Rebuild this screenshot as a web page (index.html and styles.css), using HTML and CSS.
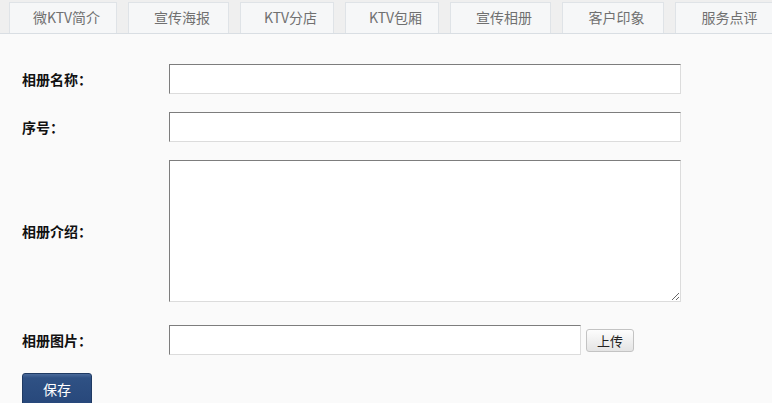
FILE: index.html
```html
<!DOCTYPE html>
<html lang="zh">
<head>
<meta charset="utf-8">
<title>相册</title>
<link rel="stylesheet" href="styles.css">
</head>
<body>
<div class="tabs">
  <div class="tab w1">微KTV简介</div>
  <div class="tab w2">宣传海报</div>
  <div class="tab w3">KTV分店</div>
  <div class="tab w3">KTV包厢</div>
  <div class="tab w2">宣传相册</div>
  <div class="tab w4">客户印象</div>
  <div class="tab w4">服务点评</div>
</div>
<form class="form">
  <div class="row">
    <label class="label">相册名称：</label>
    <input class="field" type="text">
  </div>
  <div class="row">
    <label class="label">序号：</label>
    <input class="field" type="text">
  </div>
  <div class="row">
    <label class="label">相册介绍：</label>
    <textarea class="field area"></textarea>
  </div>
  <div class="row row-file">
    <label class="label">相册图片：</label>
    <div class="file-wrap">
      <input class="field file" type="text">
      <button type="button" class="upload">上传</button>
    </div>
  </div>
  <div class="row-save">
    <button type="button" class="save">保存</button>
  </div>
</form>
</body>
</html>
```
FILE: styles.css
```css
html, body {
  margin: 0;
  padding: 0;
  background: #fafafa;
  font-family: "Noto Sans CJK SC", "DejaVu Sans", sans-serif;
  overflow: hidden;
}
.tabs {
  display: flex;
  gap: 11px;
  height: 31px;
  padding: 2px 0 0 9px;
  background: #efefef;
  border-bottom: 1px solid #d9dee3;
  overflow: hidden;
  white-space: nowrap;
}
.tab {
  flex: none;
  box-sizing: border-box;
  height: 31px;
  line-height: 29px;
  background: #f6f7f8;
  border: 1px solid #dfe3e7;
  border-bottom: none;
  color: #707070;
  font-size: 14px;
  padding-left: 7px;
  text-align: center;
}
.w1 { width: 108px; }
.w2 { width: 101px; }
.w3 { width: 94px; }
.w4 { width: 102px; }
.form {
  padding: 30px 0 0 22px;
  display: flex;
  flex-direction: column;
  gap: 18px;
}
.row {
  display: flex;
  align-items: center;
}
.row-file { margin-top: 5px; }
.label {
  width: 147px;
  font-size: 14px;
  font-weight: bold;
  color: #111;
}
.field {
  box-sizing: border-box;
  width: 512px;
  height: 30px;
  margin: 0;
  border: 1px solid;
  border-color: #7d7d7d #dcdcdc #dcdcdc #7d7d7d;
  background: #fff;
  padding: 2px 4px;
  font-family: inherit;
}
.area {
  height: 142px;
  resize: both;
}
.file-wrap {
  display: flex;
  align-items: center;
  gap: 5px;
}
.file { width: 412px; }
.upload {
  width: 48px;
  height: 23px;
  margin: 0;
  padding: 0;
  border: 1px solid #c3c3c3;
  border-radius: 3px;
  background: linear-gradient(#fdfdfd, #e4e4e4);
  font-family: inherit;
  font-size: 13px;
  color: #222;
}
.save {
  width: 70px;
  height: 34px;
  margin: 0;
  padding: 0 0 2px;
  border: 1px solid #1f3a63;
  border-radius: 3px 3px 0 0;
  background: linear-gradient(#4a6a9a 0, #2f5184 4px, #27477a 100%);
  color: #fff;
  font-family: inherit;
  font-size: 14px;
}
```
